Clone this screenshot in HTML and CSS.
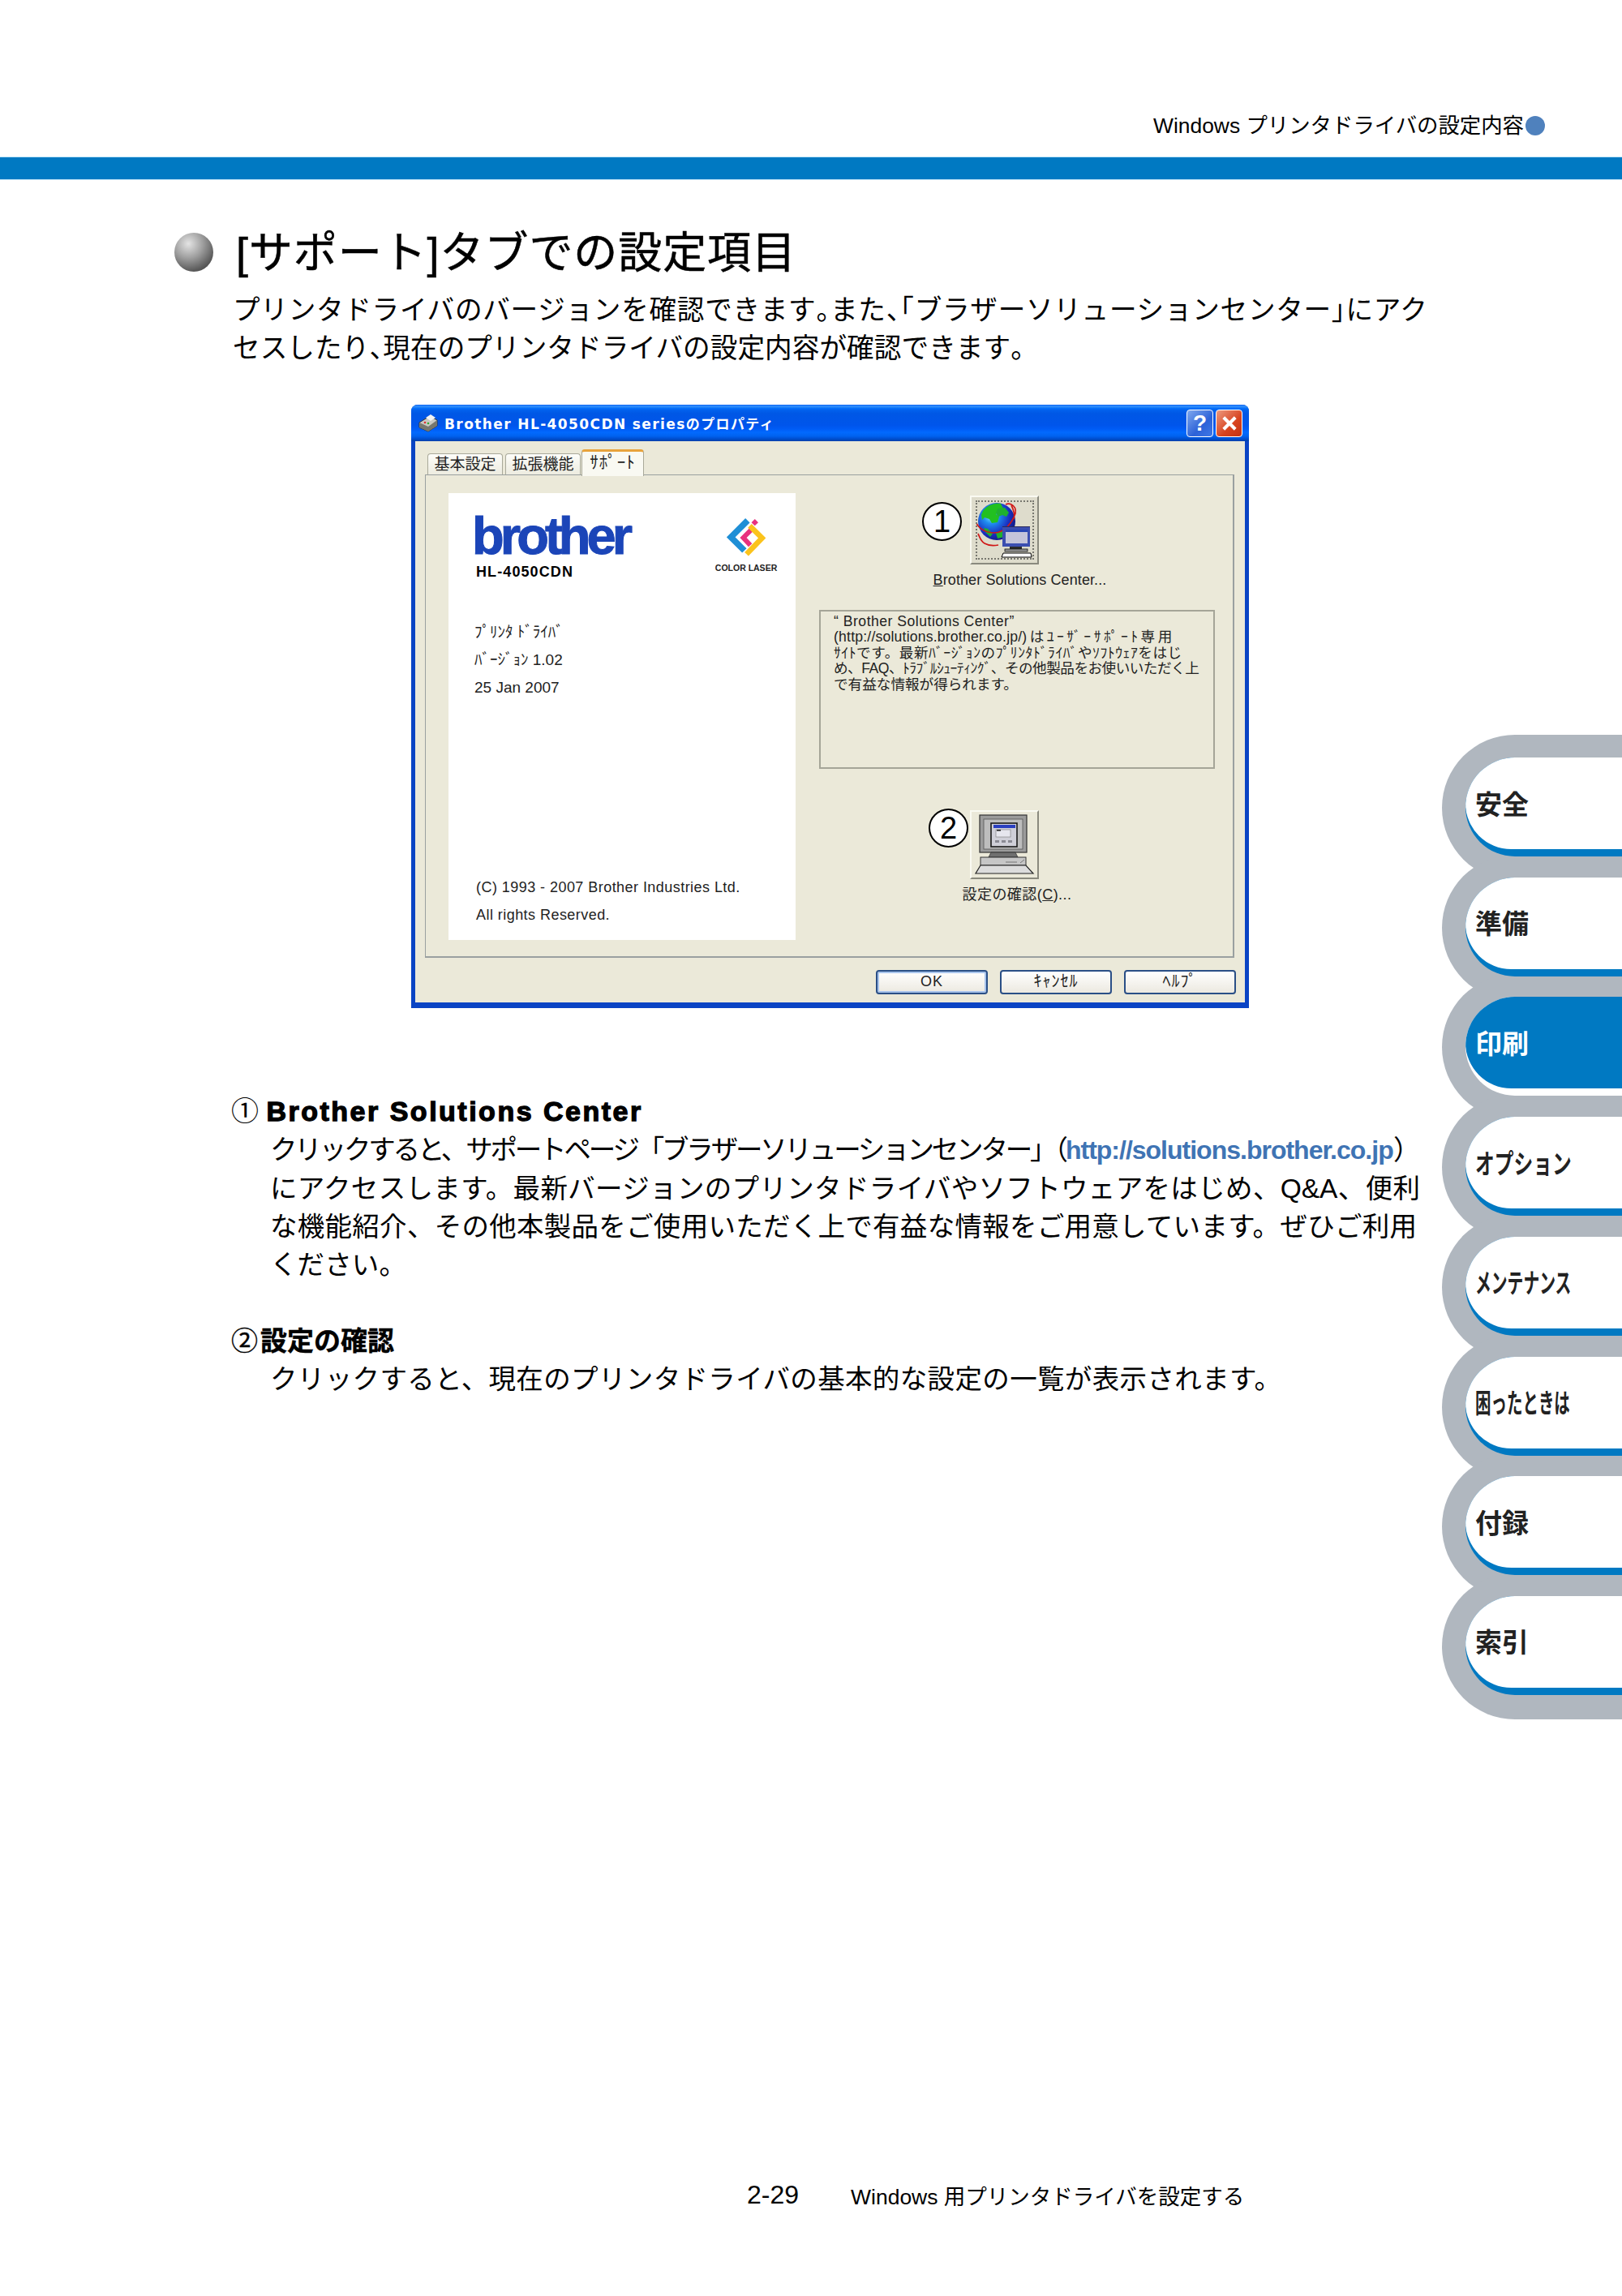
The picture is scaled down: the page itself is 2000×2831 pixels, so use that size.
FILE: index.html
```html
<!DOCTYPE html>
<html lang="ja">
<head>
<meta charset="utf-8">
<title>[サポート]タブでの設定項目</title>
<link rel="stylesheet" href="styles.css">
</head>
<body>
<div class="page">
  <header class="top"><span>Windows プリンタドライバの設定内容</span><i class="top-dot"></i></header>
  <div class="bar"></div>

  <main class="main">
    <div class="head-row"><i class="ball"></i><h1 class="heading">[サポート]タブでの設定項目</h1></div>
    <p class="lead">
      <span class="ln w-lead1">プリンタドライバのバージョンを確認できます<span class="h">。</span>また<span class="h">、「</span>ブラザーソリューションセンター<span class="h">」</span>にアク</span>
      <span class="ln w-lead2">セスしたり<span class="h">、</span>現在のプリンタドライバの設定内容が確認できます<span class="h">。</span></span>
    </p>

    <section class="dialog">
      <div class="titlebar">
        <svg class="printer" viewBox="0 0 26 24"><path d="M2 11 15 3l9 5v7l-11 7-11-5z" fill="#c9c9c4" stroke="#333" stroke-width="1"/><path d="M2 11l11 5 11-8v7l-11 7-11-5z" fill="#77776f"/><path d="M10 5l6-4 6 4-6 4z" fill="#f4f4f4"/><circle cx="9" cy="11" r="1.3" fill="#d33"/><circle cx="13" cy="12" r="1.3" fill="#3a3"/></svg>
        <span class="title-text">Brother HL-4050CDN seriesのプロパティ</span>
        <span class="tb-btn tb-help">?</span>
        <span class="tb-btn tb-close"><svg viewBox="0 0 20 20"><path d="M4 4l12 12M16 4 4 16" stroke="#fff" stroke-width="3.4"/></svg></span>
      </div>
      <div class="tabs">
        <span class="tab">基本設定</span><span class="tab">拡張機能</span><span class="tab tab-on">ｻﾎﾟｰﾄ</span>
      </div>
      <div class="panel">
        <div class="about">
          <div class="brand-row">
            <div class="brand">
              <span class="brother">brother</span>
              <span class="model">HL-4050CDN</span>
            </div>
            <div class="color-logo">
              <svg class="diamond" viewBox="50 25 145 150"><path d="M128 36 66 98l50 50" fill="none" stroke="#1f8fd6" stroke-width="23"/><path d="M150 62 112 100l26 28" fill="none" stroke="#e8327e" stroke-width="18"/><rect x="146" y="34" width="18" height="18" transform="rotate(45 155 43)" fill="#e8327e"/><path d="M136 56l46 45-58 60" fill="none" stroke="#fbc31c" stroke-width="20"/></svg>
              <span class="laser">COLOR LASER</span>
            </div>
          </div>
          <div class="about-lines">
            <span>ﾌﾟﾘﾝﾀ ﾄﾞﾗｲﾊﾞ</span>
            <span>ﾊﾞｰｼﾞｮﾝ 1.02</span>
            <span>25 Jan 2007</span>
          </div>
          <div class="about-copy">
            <span>(C) 1993 - 2007 Brother Industries Ltd.</span>
            <span>All rights Reserved.</span>
          </div>
        </div>
        <div class="side">
          <div class="icon-btn btn-a">
            <span class="callout callout-1">1</span>
            <svg class="icon" viewBox="6 6 85 85">
              <defs><radialGradient id="globe" cx="35%" cy="35%" r="70%"><stop offset="0" stop-color="#7ff0ff"/><stop offset=".3" stop-color="#1f8cf0"/><stop offset=".7" stop-color="#1a2fc0"/><stop offset="1" stop-color="#101a80"/></radialGradient></defs>
              <circle cx="39" cy="38" r="23" fill="url(#globe)"/>
              <path d="M22 25c6-8 15-10 22-9l3 6-6 2-3 5 4 3-2 7-7 1-3-5-6-2-3 3-1-6z" fill="#22c020"/>
              <path d="M40 22l9-1 5 6-3 5-5-2-5 2-3-4zM23 46l5 1 6 6-3 4-6-6zM38 52l8-3 5 2-3 6-8 2z" fill="#1fb030"/>
              <path d="M14 40c3 7 12 12 22 12 12 0 22-12 26-24 1-5-1-9-5-11-2-1-5-1-7 0M16 53c2 4 3 9 8 12s11 3 17 2M57 18c3 6 5 11 3 17" fill="none" stroke="#d01818" stroke-width="1.7"/>
              <rect x="46" y="44" width="34" height="25" fill="#2b2b5a"/>
              <rect x="46" y="45" width="34" height="24" fill="#3b4eb0"/>
              <rect x="50" y="48" width="27" height="17" fill="#c4c4da"/>
              <rect x="50" y="48" width="27" height="3" fill="#2746b4"/>
              <rect x="55" y="69" width="15" height="4" fill="#2a2a2a"/>
              <rect x="49" y="72" width="28" height="3" fill="#9a9a9a" stroke="#111" stroke-width=".8"/>
              <path d="M47 77h34l1 5H45z" fill="#fff" stroke="#000" stroke-width="1"/>
            </svg>
            <i class="focus"></i>
          </div>
          <div class="icon-label label-a"><u>B</u>rother Solutions Center...</div>
          <div class="infobox">
            <span class="il w-i1">“ Brother Solutions Center”</span>
            <span class="il w-i2">(http://solutions.brother.co.jp/)はﾕｰｻﾞｰｻﾎﾟｰﾄ専用</span>
            <span class="il w-i3">ｻｲﾄです。最新ﾊﾞｰｼﾞｮﾝのﾌﾟﾘﾝﾀﾄﾞﾗｲﾊﾞやｿﾌﾄｳｪｱをはじ</span>
            <span class="il w-i4">め、FAQ、ﾄﾗﾌﾞﾙｼｭｰﾃｨﾝｸﾞ、その他製品をお使いいただく上</span>
            <span class="il w-i5">で有益な情報が得られます。</span>
          </div>
          <div class="icon-btn btn-b">
            <span class="callout callout-2">2</span>
            <svg class="icon" viewBox="6 7 85 85">
              <rect x="18" y="13" width="58" height="46" fill="#9b9b9b" stroke="#333" stroke-width="1.2"/>
              <rect x="23" y="18" width="48" height="37" fill="#bdbdbd" stroke="#555" stroke-width=".8"/>
              <rect x="32" y="23" width="32" height="29" fill="#cfcfd8" stroke="#1b1b1b" stroke-width="1.6"/>
              <rect x="35" y="25" width="27" height="4" fill="#2a3fc0"/>
              <rect x="38" y="31" width="18" height="9" fill="#e6e6ee" stroke="#777" stroke-width=".6"/>
              <rect x="39" y="31" width="5" height="1.6" fill="#222"/>
              <path d="M37 44h5v3h-5zM45 44h5v3h-5zM53 44h5v3h-5z" fill="#8a8a94"/>
              <path d="M32 59h30l3 6H29z" fill="#6f6f6f" stroke="#333" stroke-width=".8"/>
              <rect x="19" y="65" width="56" height="10" fill="#c6c6c6" stroke="#333" stroke-width="1"/>
              <path d="M50 71h14M68 72l5-4" stroke="#777" stroke-width="1"/>
              <path d="M19 75h56l9 10H13z" fill="#dcdcdc" stroke="#222" stroke-width="1.2"/>
            </svg>
          </div>
          <div class="icon-label">設定の確認(<u>C</u>)...</div>
        </div>
      </div>
      <div class="dlg-buttons">
        <span class="dlg-btn dlg-ok">OK</span>
        <span class="dlg-btn">ｷｬﾝｾﾙ</span>
        <span class="dlg-btn">ﾍﾙﾌﾟ</span>
      </div>
    </section>

    <section class="notes">
      <h2 class="note-head"><span class="circled">①</span> <span class="note-en">Brother Solutions Center</span></h2>
      <p class="note-body">
        <span class="ln w-n1">クリックすると、サポートページ「ブラザーソリューションセンター」（<a class="link">http://solutions.brother.co.jp</a>）</span>
        <span class="ln w-n2">にアクセスします。最新バージョンのプリンタドライバやソフトウェアをはじめ、Q&amp;A、便利</span>
        <span class="ln w-n3">な機能紹介、その他本製品をご使用いただく上で有益な情報をご用意しています。ぜひご利用</span>
        <span class="ln w-n4">ください。</span>
      </p>
      <h2 class="note-head note-second"><span class="circled">②</span>設定の確認</h2>
      <p class="note-body">
        <span class="ln w-n5">クリックすると、現在のプリンタドライバの基本的な設定の一覧が表示されます。</span>
      </p>
    </section>
  </main>

  <footer class="foot"><span class="foot-num">2-29</span><span class="foot-text">Windows 用プリンタドライバを設定する</span></footer>

  <nav class="sidenav">
    <div class="lobe"><div class="pill"><div class="pill-in"><span>安全</span></div></div></div>
    <div class="lobe"><div class="pill"><div class="pill-in"><span>準備</span></div></div></div>
    <div class="lobe"><div class="pill pill-on"><div class="pill-in"><span>印刷</span></div></div></div>
    <div class="lobe"><div class="pill"><div class="pill-in"><span class="c74">オプション</span></div></div></div>
    <div class="lobe"><div class="pill"><div class="pill-in"><span class="c61">メンテナンス</span></div></div></div>
    <div class="lobe"><div class="pill"><div class="pill-in"><span class="c60">困ったときは</span></div></div></div>
    <div class="lobe"><div class="pill"><div class="pill-in"><span>付録</span></div></div></div>
    <div class="lobe"><div class="pill"><div class="pill-in"><span>索引</span></div></div></div>
  </nav>
</div>
</body>
</html>
```

FILE: styles.css
```css
* { box-sizing: border-box; }
html, body { margin: 0; padding: 0; background: #fff; }
body { font-family: "Liberation Sans", "Noto Sans CJK JP", sans-serif; color: #000; }
.page { position: relative; width: 2000px; height: 2831px; overflow: hidden; background: #fff; }

.top { height: 193px; padding: 136px 95px 0 0; display: flex; justify-content: flex-end; align-items: flex-start; gap: 2px; font-size: 26.4px; line-height: 38px; }
.top-dot { width: 24px; height: 24px; margin-top: 7px; border-radius: 50%; background: #4f81bd; }
.bar { height: 29px; background: #0079c2; border-top: 1px solid #bfe4f8; border-bottom: 1px solid #bfe4f8; }

.main { padding-left: 215px; }
.head-row { display: flex; align-items: center; height: 50px; margin-top: 62px; }
.ball { flex: none; width: 48px; height: 48px; margin-top: 4px; border-radius: 50%; background: radial-gradient(circle at 36% 28%, #e4e4e4 0, #a0a0a0 38%, #5c5c5c 72%, #333 100%); }
.heading { margin: 5px 0 0 28px; width: 690px; font-size: 54px; line-height: 50px; font-weight: 400; white-space: nowrap; text-align-last: justify; -webkit-text-stroke: .5px #000; }

.ln { display: block; line-height: 47px; white-space: nowrap; text-align-last: justify; font-size: 33.5px; }
.h { font-feature-settings: "halt"; }
.lead { margin: 25px 0 0 72px; }
.lead .ln { font-size: 33.6px; }
.w-lead1 { width: 1473px; }
.w-lead2 { width: 976px; }

.dialog { width: 1033px; height: 744px; margin: 46px 0 0 292px; background: #ebe9d9; border: solid #0a44c4; border-width: 0 5px 7px; border-radius: 8px 8px 0 0; font-size: 18px; display: flex; flex-direction: column; }
.titlebar { flex: none; height: 45px; margin: 0 -5px; padding: 0 8px 0 8px; display: flex; align-items: center; border-radius: 8px 8px 0 0; background: linear-gradient(#0058ee, #3593ff 4%, #1a7cf5 8%, #036ffc 10%, #0262ee 14%, #0057e5 24%, #0055eb 56%, #005bf5 66%, #026afe 76%, #0062ef 86%, #0052d6 92%, #0040ab 100%); }
.printer { width: 26px; height: 24px; flex: none; }
.title-text { margin-left: 7px; color: #fff; font: 700 17px "DejaVu Sans", "Noto Sans CJK JP", sans-serif; letter-spacing: 1.4px; white-space: nowrap; flex: 1; }
.tb-btn { flex: none; width: 33px; height: 34px; border: 1px solid #fff; border-radius: 4px; display: flex; align-items: center; justify-content: center; color: #fff; font-size: 28px; font-weight: 700; }
.tb-help { background: linear-gradient(135deg, #7fa8ee, #2d62d8 60%, #3f78e6); margin-right: 3px; }
.tb-close { background: linear-gradient(135deg, #ec9a80, #d8431e 60%, #c23214); }
.tb-close svg { width: 24px; height: 24px; }

.tabs { flex: none; display: flex; align-items: flex-end; height: 42px; padding: 10px 0 0 15px; margin-bottom: -1px; }
.tab { width: 93px; height: 27px; margin-right: 3px; border: 1px solid #a9a99a; border-bottom: 0; border-radius: 4px 4px 0 0; background: linear-gradient(#fdfdf9, #ecebdf); text-align: center; font-size: 19px; line-height: 26px; color: #222; }
.tab-on { position: relative; z-index: 1; width: 77px; height: 33px; margin: 0 0 -1px -2px; border-top: 3px solid #e8a33c; background: #f9f9f2; line-height: 26px; font-size: 21px; letter-spacing: 1px; }

.panel { flex: none; width: 998px; height: 596px; margin-left: 12px; padding: 22px 0 0 28px; display: flex; gap: 29px; border: 1px solid #9aa0a0; border-right-width: 2px; border-bottom-width: 2px; }

.about { width: 428px; height: 551px; padding: 30px 23px 0 32px; background: #fff; display: flex; flex-direction: column; }
.brand-row { display: flex; justify-content: space-between; height: 133px; }
.brand { display: flex; flex-direction: column; }
.brother { font-size: 65px; line-height: 46px; font-weight: 700; letter-spacing: -4.9px; color: #1b45b8; margin-left: -3px; -webkit-text-stroke: 1px #1b45b8; }
.model { margin-top: 13px; font-size: 18px; line-height: 16px; font-weight: 700; letter-spacing: 1.1px; margin-left: 2px; }
.color-logo { display: flex; flex-direction: column; align-items: center; width: 76px; }
.diamond { width: 48px; height: 50px; }
.laser { margin-top: 7px; font-size: 10.5px; line-height: 11px; font-weight: 700; white-space: nowrap; color: #222; }
.about-lines { display: flex; flex-direction: column; font-size: 19px; line-height: 34px; margin-top: -8px; color: #222; }
.about-copy { margin-top: auto; margin-bottom: 14px; margin-left: 2px; display: flex; flex-direction: column; font-size: 18px; line-height: 34px; color: #222; letter-spacing: .45px; }

.side { width: 488px; display: flex; flex-direction: column; }
.icon-btn { position: relative; width: 85px; height: 85px; margin-left: 186px; background: #ebe9d9; border: 2px solid; border-color: #fafaf2 #8a8a7e #8a8a7e #fafaf2; }
.btn-a { margin-top: 3px; background: #dedccc; }
.btn-b { margin-top: 51px; }
.icon { display: block; position: absolute; left: -2px; top: -2px; width: 85px; height: 85px; }
.focus { position: absolute; left: 5px; top: 4px; width: 72px; height: 73px; border: 2px dotted #77776f; }
.callout { position: absolute; width: 49px; height: 48px; border: 2px solid #000; border-radius: 50%; background: #fff; font-size: 38px; line-height: 44px; text-align: center; }
.callout-1 { left: -61px; top: 6px; }
.callout-2 { left: -53px; top: -4px; }
.icon-label { margin-top: 8px; text-align: center; font-size: 18px; line-height: 22px; color: #222; white-space: nowrap; letter-spacing: .45px; }
.label-a { padding-left: 7px; letter-spacing: .1px; }
.infobox { height: 196px; margin-top: 26px; width: 488px; padding: 3px 0 0 16px; border: 2px solid #a5a598; font-size: 17.6px; color: #222; }
.il { display: block; line-height: 19.4px; white-space: nowrap; }
.w-i1 { letter-spacing: .5px; }
.w-i2 { width: 424px; text-align-last: justify; letter-spacing: .2px; }
.w-i3 { width: 432px; text-align-last: justify; }
.w-i4 { width: 448px; text-align-last: justify; letter-spacing: -.5px; }
.w-i5 { width: 212px; text-align-last: justify; }

.dlg-buttons { flex: none; display: flex; justify-content: flex-end; gap: 15px; padding: 15px 11px 0 0; }
.dlg-btn { width: 138px; height: 30px; border: 2px solid #2a4f86; border-radius: 4px; background: linear-gradient(#fff, #ece9e0); text-align: center; font-size: 20px; line-height: 25px; color: #222; letter-spacing: 1px; }
.dlg-ok { box-shadow: inset 0 0 0 2px #a8c4ec; font-size: 18px; }

.notes { margin-top: 104px; padding-left: 70px; }
.note-head { margin: 0; font-size: 34px; line-height: 47px; font-weight: 700; white-space: nowrap; }
.circled { font-weight: 400; }
.note-en { font-size: 34px; letter-spacing: 2.5px; -webkit-text-stroke: 1.3px #000; }
.note-second { margin-top: 1px; font-size: 33px; -webkit-text-stroke: .4px #000; }
.note-body { margin: 0 0 0 48px; }
.note-body + .note-head { margin-top: 47px; }
.note-second { padding-left: 3px; }
.note-second .circled { margin-left: -3px; margin-right: 3px; }
.w-n1 { width: 1415px; letter-spacing: -3.4px; }
.w-n2 { width: 1418px; }
.w-n3 { width: 1414px; }
.w-n4 { width: 168px; }
.w-n5 { width: 1247px; }
.link { color: #3f74b4; font-weight: 700; letter-spacing: -1px; font-size: 32px; }

.foot { margin-top: 959px; padding-left: 921px; display: flex; align-items: center; height: 47px; font-size: 26.5px; }
.foot-num { width: 128px; font-size: 32px; }
.foot-text { white-space: nowrap; }

.sidenav { position: absolute; right: 0; top: 906px; width: 222px; }
.lobe { height: 180px; margin-bottom: -32.3px; padding: 28px 0 0 29px; background: #b0b7bf; border-radius: 90px 0 0 90px; }
.pill { position: relative; z-index: 1; height: 122px; border-radius: 61px 0 0 61px; background: #0079c2; overflow: hidden; }
.pill-in { height: 113px; padding: 0 0 2px 12px; display: flex; align-items: center; border-radius: 57px 0 0 57px; background: #fff; font-size: 33px; font-weight: 700; color: #222; white-space: nowrap; }
.pill-on { background: #fff; }
.pill-on .pill-in { background: #0079c2; color: #fff; }
.pill-in span { display: inline-block; transform-origin: left center; }
.c74 { transform: scaleX(.72); }
.c61 { transform: scaleX(.6); }
.c60 { transform: scaleX(.59); }
```
